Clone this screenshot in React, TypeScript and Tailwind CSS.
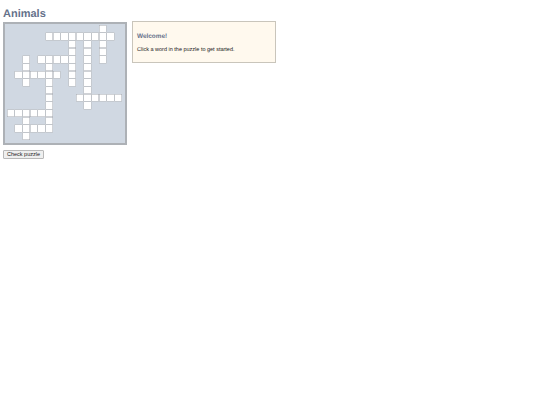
const layout = [
  "............#..",
  ".....#########.",
  "........#.#.#..",
  "........#.#.#..",
  "..#.#####.#.#..",
  "..#..#..#.#....",
  ".######.#.#....",
  "..#..#..#.#....",
  ".....#....#....",
  ".....#...######",
  ".....#....#....",
  "######.........",
  "..#..#.........",
  ".#####.........",
  "..#............",
]

function Board() {
  return (
    <div className="w-[124px] h-[123px] border-2 border-[#adb1b6] bg-[#d0d8e2] pt-[1px] pl-[2px]">
      <div className="w-[115px] h-[115px]">
        <div className="origin-top-left scale-50 grid grid-cols-[repeat(15,15.33px)] grid-rows-[repeat(15,15.33px)] w-[230px] h-[230px]">
          {layout.map((row, r) =>
            row.split("").map((ch, c) =>
              ch === "#" ? (
                <div key={r + "-" + c} className="bg-white border border-[#a0a5ad]" />
              ) : (
                <div key={r + "-" + c} />
              )
            )
          )}
        </div>
      </div>
    </div>
  )
}

export default function App() {
  return (
    <div className="min-h-[405px] bg-white px-[3px] pt-[8px] font-['Liberation_Sans',Arial,sans-serif] [text-rendering:geometricPrecision]">
      <h1 className="text-[11px] leading-[13px] font-bold text-[#66728b]">Animals</h1>
      <div className="mt-[1px] flex items-start gap-[5px]">
        <Board />
        <div className="w-[144px] h-[42px] -mt-[1px] border border-[#c9c5bb] bg-[#fff9ee] px-[4px] pt-[11px]">
          <h2 className="text-[6.4px] leading-[8px] font-bold text-[#66728b]">Welcome!</h2>
          <p className="mt-[6px] text-[5.5px] leading-[7px] text-[#222222]">Click a word in the puzzle to get started.</p>
        </div>
      </div>
      <button className="mt-[5px] block w-[41px] h-[9px] border border-[#b8b8b8] rounded-[1px] bg-[#efefef] text-[5.5px] leading-[7px] text-[#222222] text-center">
        Check puzzle
      </button>
    </div>
  )
}
